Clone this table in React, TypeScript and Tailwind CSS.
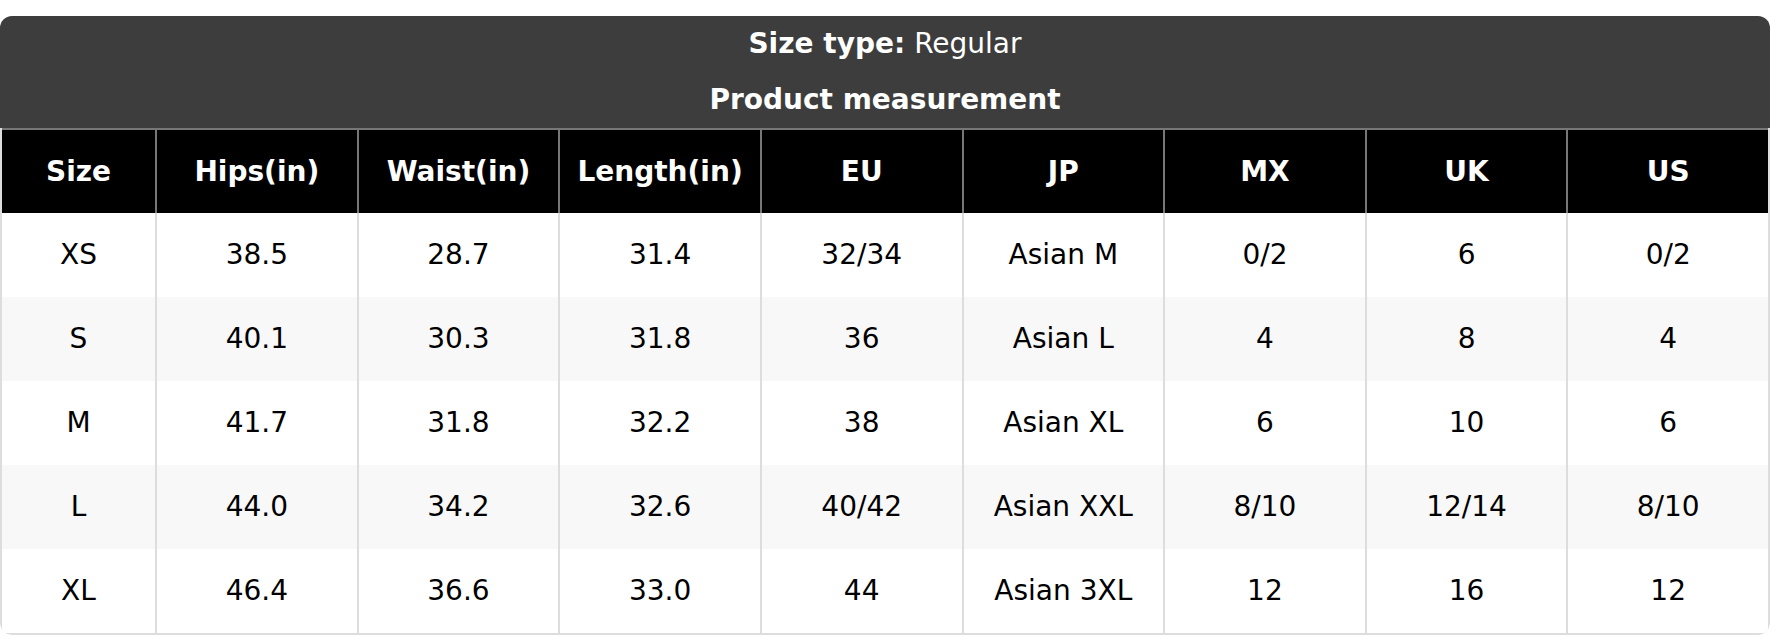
const columns = ["Size", "Hips(in)", "Waist(in)", "Length(in)", "EU", "JP", "MX", "UK", "US"];

const rows: string[][] = [
  ["XS", "38.5", "28.7", "31.4", "32/34", "Asian M", "0/2", "6", "0/2"],
  ["S", "40.1", "30.3", "31.8", "36", "Asian L", "4", "8", "4"],
  ["M", "41.7", "31.8", "32.2", "38", "Asian XL", "6", "10", "6"],
  ["L", "44.0", "34.2", "32.6", "40/42", "Asian XXL", "8/10", "12/14", "8/10"],
  ["XL", "46.4", "36.6", "33.0", "44", "Asian 3XL", "12", "16", "12"],
];

export default function App() {
  return (
    <div className="bg-white pt-4 font-['DejaVu_Sans',sans-serif] text-[28px]">
      <div className="overflow-hidden rounded-xl">
        <div className="bg-[#3d3d3d] text-white">
          <div className="flex h-[56px] items-center justify-center">
            <span className="font-bold">Size type:</span>
            <span className="ml-[9px]">Regular</span>
          </div>
          <div className="flex h-[56px] items-center justify-center font-bold">Product measurement</div>
        </div>

        <div className="rounded-b-xl border-x-2 border-b-2 border-[#ddd]">
          <div className="grid grid-cols-[153px_repeat(8,minmax(0,1fr))] border-t-2 border-[#777] bg-black text-white">
            {columns.map((col, i) => (
              <div
                key={col}
                className={`flex h-[83px] items-center justify-center font-bold ${i > 0 ? "border-l-2 border-[#777]" : ""}`}
              >
                {col}
              </div>
            ))}
          </div>

          {rows.map((row, r) => (
            <div
              key={row[0]}
              className={`grid grid-cols-[153px_repeat(8,minmax(0,1fr))] text-black ${r % 2 === 1 ? "bg-[#f8f8f8]" : "bg-white"}`}
            >
              {row.map((cell, i) => (
                <div
                  key={i}
                  className={`flex h-[84px] items-center justify-center ${i > 0 ? "border-l-2 border-[#ddd]" : ""}`}
                >
                  {cell}
                </div>
              ))}
            </div>
          ))}
        </div>
      </div>
    </div>
  );
}
